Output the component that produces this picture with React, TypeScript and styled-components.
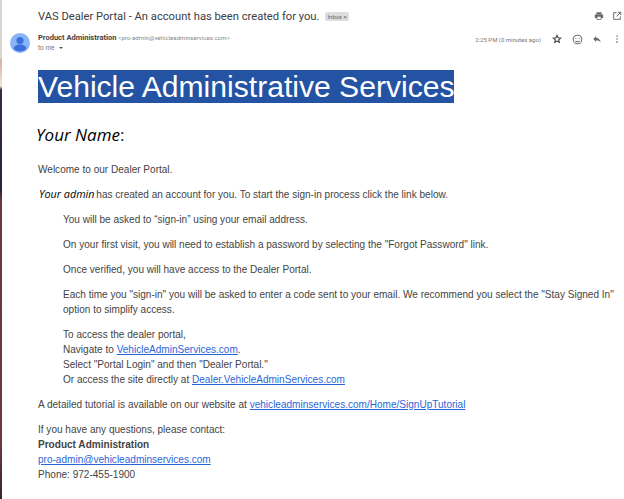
import { FC } from "react";
import styled, { createGlobalStyle } from "styled-components";

const GlobalStyle = createGlobalStyle`
  html, body {
    margin: 0;
    padding: 0;
    background: #fff;
  }
`;

const App: FC = () => {
  return (
    <>
      <GlobalStyle />
      <Page>
        <Strip />
        <Mail>
          <SubjectRow>
            <Subject>VAS Dealer Portal - An account has been created for you.</Subject>
            <Badge>
              Inbox <span>×</span>
            </Badge>
            <TopIcons>
              <IconBox>
                <svg width="10" height="10" viewBox="0 0 24 24" fill="#666a6e">
                  <path d="M19 8H5a3 3 0 0 0-3 3v6h4v4h12v-4h4v-6a3 3 0 0 0-3-3zm-3 11H8v-5h8v5zM18 3H6v4h12V3z" />
                </svg>
              </IconBox>
              <IconBox>
                <svg width="10" height="10" viewBox="0 0 24 24" fill="none" stroke="#666a6e" strokeWidth="2.4">
                  <path d="M11 4H4v16h16v-7" />
                  <path d="M14 3h7v7M21 3l-10 10" />
                </svg>
              </IconBox>
            </TopIcons>
          </SubjectRow>

          <SenderRow>
            <Avatar>
              <svg width="20" height="20" viewBox="0 0 20 20">
                <circle cx="10" cy="10" r="10" fill="#8ab4f8" />
                <circle cx="10" cy="7.5" r="3.6" fill="#3b6fdc" />
                <path d="M3.6 16c0-3 3-4.6 6.4-4.6s6.4 1.6 6.4 4.6a9.6 9.6 0 0 1-12.8 0z" fill="#3b6fdc" />
              </svg>
            </Avatar>
            <SenderInfo>
              <SenderLine>
                <SenderName>Product Administration</SenderName>
                <SenderMail>&lt;pro-admin@vehicleadminservices.com&gt;</SenderMail>
              </SenderLine>
              <ToMe>
                to me <Caret />
              </ToMe>
            </SenderInfo>
            <Meta>
              <Time>2:25 PM (0 minutes ago)</Time>
              <MetaIcons>
                <IconBox>
                  <svg width="10" height="10" viewBox="0 0 24 24" fill="none" stroke="#444" strokeWidth="2.8">
                    <path d="M12 3.5l2.6 5.6 6 .7-4.4 4.2 1.2 6-5.4-3-5.4 3 1.2-6L3.4 9.8l6-.7z" />
                  </svg>
                </IconBox>
                <IconBox>
                  <svg width="11" height="11" viewBox="0 0 24 24" fill="none" stroke="#666a6e" strokeWidth="2.2">
                    <circle cx="12" cy="12" r="9.5" />
                    <circle cx="8.5" cy="10" r="1.2" fill="#666a6e" stroke="none" />
                    <circle cx="15.5" cy="10" r="1.2" fill="#666a6e" stroke="none" />
                    <path d="M7.5 15c1.5 2.4 7.5 2.4 9 0" />
                  </svg>
                </IconBox>
                <IconBox>
                  <svg width="10" height="10" viewBox="0 0 24 24" fill="#666a6e">
                    <path d="M10 9V5l-7 7 7 7v-4.1c5 0 8.5 1.6 11 5.1-1-5-4-10-11-11z" />
                  </svg>
                </IconBox>
                <IconBox>
                  <svg width="10" height="10" viewBox="0 0 24 24" fill="#777">
                    <circle cx="12" cy="5" r="2" />
                    <circle cx="12" cy="12" r="2" />
                    <circle cx="12" cy="19" r="2" />
                  </svg>
                </IconBox>
              </MetaIcons>
            </Meta>
          </SenderRow>

          <Body>
            <Banner>
              <span>Vehicle Administrative Services</span>
            </Banner>
            <Greeting>
              <em>Your Name</em>:
            </Greeting>
            <Para>Welcome to our Dealer Portal.</Para>
            <Para>
              <Handwritten>Your admin</Handwritten> has created an account for you. To start the sign-in process click the link below.
            </Para>
            <Indent>
              <Para>You will be asked to “sign-in” using your email address.</Para>
              <Para>On your first visit, you will need to establish a password by selecting the "Forgot Password" link.</Para>
              <Para>Once verified, you will have access to the Dealer Portal.</Para>
              <Para>
                Each time you "sign-in" you will be asked to enter a code sent to your email. We recommend you select the "Stay Signed In"
                <br />
                option to simplify access.
              </Para>
              <Para>
                To access the dealer portal,
                <br />
                Navigate to <Link>VehicleAdminServices.com</Link>.
                <br />
                Select "Portal Login" and then "Dealer Portal."
                <br />
                Or access the site directly at <Link>Dealer.VehicleAdminServices.com</Link>
              </Para>
            </Indent>
            <Para>
              A detailed tutorial is available on our website at <Link>vehicleadminservices.com/Home/SignUpTutorial</Link>
            </Para>
            <Para>
              If you have any questions, please contact:
              <br />
              <b>Product Administration</b>
              <br />
              <Link>pro-admin@vehicleadminservices.com</Link>
              <br />
              Phone: 972-455-1900
            </Para>
          </Body>
        </Mail>
      </Page>
    </>
  );
};

const Page = styled.div`
  display: flex;
  width: 624px;
  height: 499px;
  overflow: hidden;
  background: #fff;
`;

const Strip = styled.div`
  flex: 0 0 2px;
  background: linear-gradient(
    to bottom,
    #d8d4d0 0,
    #d8d4d0 58px,
    #d6b0a8 60px,
    #e8d0c0 76px,
    #f0e8d8 86px,
    #3a2a40 90px,
    #2c2238 190px,
    #6a3a40 200px,
    #6e3a40 440px,
    #3a2428 499px
  );
`;

const Mail = styled.div`
  flex: 1;
  min-width: 0;
  display: flex;
  flex-direction: column;
`;

const SubjectRow = styled.div`
  display: flex;
  align-items: center;
  height: 32px;
  padding-left: 36px;
  padding-right: 1px;
`;

const Subject = styled.div`
  font-family: Roboto, sans-serif;
  font-size: 11.2px;
  color: #3c4043;
  white-space: nowrap;
`;

const Badge = styled.div`
  margin-left: 6px;
  padding: 0 2px;
  height: 9px;
  line-height: 9px;
  background: #dddddd;
  border-radius: 2px;
  font-family: Roboto, sans-serif;
  font-size: 6px;
  color: #666;
  white-space: nowrap;
`;

const TopIcons = styled.div`
  margin-left: auto;
  display: flex;
  gap: 6px;
`;

const IconBox = styled.div`
  display: flex;
  align-items: center;
  justify-content: center;
  width: 12px;
  height: 12px;
`;

const SenderRow = styled.div`
  display: flex;
  align-items: flex-start;
  height: 38px;
  padding-top: 1px;
  padding-left: 8px;
  padding-right: 1px;
  box-sizing: border-box;
`;

const Avatar = styled.div`
  flex: 0 0 20px;
  height: 20px;
  margin-right: 8px;
`;

const SenderInfo = styled.div`
  display: flex;
  flex-direction: column;
  gap: 2px;
`;

const SenderLine = styled.div`
  display: flex;
  align-items: baseline;
  gap: 2px;
  white-space: nowrap;
`;

const SenderName = styled.span`
  font-family: Roboto, sans-serif;
  font-size: 7.5px;
  font-weight: 700;
  color: #444;
`;

const SenderMail = styled.span`
  font-family: Roboto, sans-serif;
  font-size: 6.1px;
  color: #888;
`;

const ToMe = styled.div`
  display: flex;
  align-items: center;
  gap: 4px;
  font-family: Roboto, sans-serif;
  font-size: 6.5px;
  color: #777;
`;

const Caret = styled.i`
  border-left: 2px solid transparent;
  border-right: 2px solid transparent;
  border-top: 2px solid #555;
`;

const Meta = styled.div`
  margin-left: auto;
  display: flex;
  align-items: center;
  gap: 10px;
`;

const Time = styled.div`
  font-family: Roboto, sans-serif;
  font-size: 6px;
  color: #777;
  white-space: nowrap;
`;

const MetaIcons = styled.div`
  display: flex;
  gap: 8px;
`;

const Body = styled.div`
  display: flex;
  flex-direction: column;
  align-items: flex-start;
  padding-left: 36px;
  font-family: "Liberation Sans", Arial, sans-serif;
  font-size: 10.05px;
  line-height: 15px;
  color: #444;
`;

const Banner = styled.div`
  font-size: 30.1px;
  line-height: 33px;
  background: #2553a3;
  color: #fff;

  span {
    display: block;
  }
`;

const Greeting = styled.div`
  margin-top: 21px;
  margin-bottom: 6px;
  margin-left: -2px;
  font-family: "Open Sans", sans-serif;
  font-size: 17px;
  line-height: 22px;
  color: #222;

  em {
    color: #000;
  }
`;

const Para = styled.div`
  margin-top: 10px;
  white-space: nowrap;
`;

const Handwritten = styled.em`
  margin-left: 1px;
  margin-right: -1px;
  font-family: "Open Sans", sans-serif;
  font-size: 10.8px;
  line-height: 0;
  color: #000;
`;

const Indent = styled.div`
  padding-left: 25px;
`;

const Link = styled.a`
  color: #2a65d8;
  text-decoration: underline;
`;

export default App;
